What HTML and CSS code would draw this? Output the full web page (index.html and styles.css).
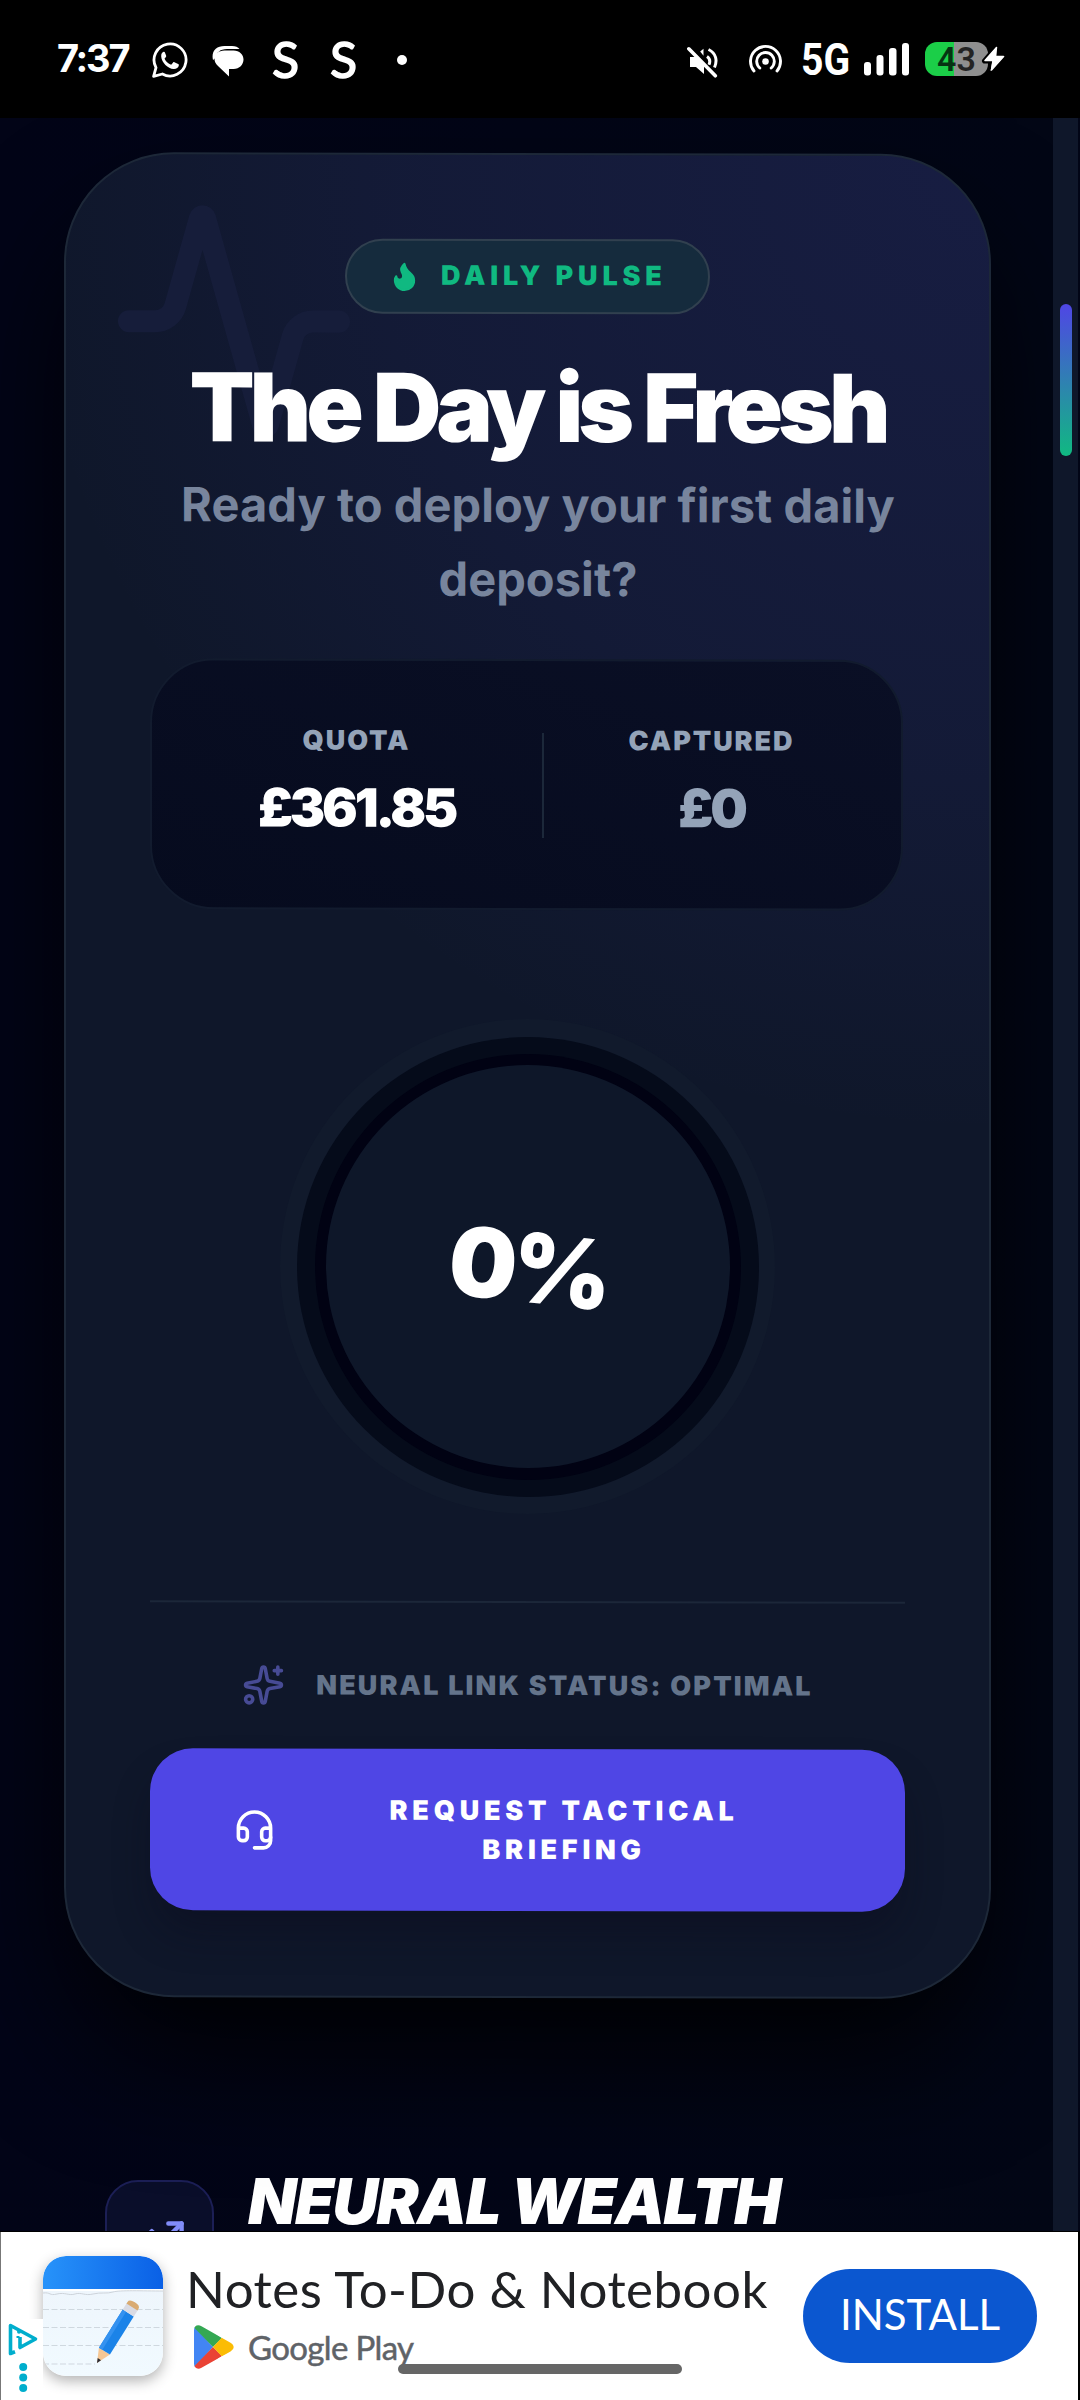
FILE: index.html
```html
<!DOCTYPE html>
<html lang="en">
<head>
<meta charset="utf-8">
<title>Daily Pulse</title>
<link rel="stylesheet" href="styles.css">
</head>
<body>
<header class="status">
  <div class="status-left">
    <span class="clock">7:37</span>
    <svg class="ico-wa" viewBox="0 0 36 36" fill="none"><path d="M1.6 34.4 4 25.6A16 16 0 1 1 10.4 32Z" stroke="#fff" stroke-width="2.8" stroke-linejoin="round"/><path d="M11.6 9.8c-.9.3-2.7 1.7-2.4 4.600C9.600 20.600 16 26.500 21.500 27c2.800.2 4.900-1.400 5.300-3.600.2-.8 0-1-.7-1.400l-3.700-1.800c-.6-.2-.9-.1-1.300.4l-1.400 1.700c-.4.4-.7.4-1.200.2-2.500-1-4.700-3.200-5.800-5.400-.2-.5-.1-.7.300-1.100.9-1 1.500-1.700 1.100-2.600l-1.300-3.100c-.3-.6-.6-.7-1.200-.5Z" fill="#fff"/></svg>
    <svg class="ico-msg" viewBox="0 0 32 32"><path d="M12.500 1h7.500c3.500 0 6 1.200 7.500 3H15C8 4 4.500 7.500 4 12.500L1 15C-1 6.500 4 1 12.500 1Z" fill="#fff"/><path d="M12.500 5.500h9C27.500 5.500 31.500 9.500 31.500 14.500S27.500 24 21.500 24H17v7.500L6 21C3.500 18.500 2.500 16.500 2.500 14 2.500 9 6.500 5.500 12.500 5.500Z" fill="#fff"/></svg>
    <span class="app-s">S</span>
    <span class="app-s app-s-last">S</span>
    <i class="more-dot"></i>
  </div>
  <div class="status-right">
    <svg class="ico-mute" viewBox="0 0 31 32" fill="none" stroke="#fff"><path d="M3 11h5.500l8.500 8.500V28l-8-7H3Z" fill="#fff" stroke="none"/><path d="m13.200 5.500 3.300-2.700v7Z" fill="#fff" stroke="none"/><path d="M20 10.500c3 2 3.300 5 2 8.200M21.500 3.500c7.800 3.800 9 11.200 6 18" stroke-width="3"/><path d="m1.800 2.800 26.500 27" stroke-width="3.600" stroke-linecap="round"/></svg>
    <svg class="ico-hot" viewBox="0 0 33 32" fill="none" stroke="#fff" stroke-width="2.900" stroke-linecap="round"><circle cx="16.500" cy="18.500" r="3.300" fill="#fff" stroke="none"/><path d="M10.800 25a8.800 8.800 0 1 1 11.400 0"/><path d="M5 28a15 15 0 1 1 23 0"/></svg>
    <span class="net"><span class="net-text">5G</span></span>
    <svg class="ico-bars" viewBox="0 0 45 34" fill="#fff"><rect y="20" width="7" height="13.500" rx="3"/><rect x="12.500" y="13" width="7" height="20.500" rx="3"/><rect x="25" y="6" width="7.500" height="27.500" rx="3"/><rect x="38" y="1" width="7" height="32.500" rx="3"/></svg>
    <div class="battery">
      <span class="battery-num">43</span>
      <svg class="bolt" viewBox="0 0 26 30"><path d="M15.500 3 3.500 17h8L9.500 27 23.500 12h-8.200Z" fill="#fff" stroke="#000" stroke-width="5" paint-order="stroke" stroke-linejoin="round"/><path d="M15.500 3.500 4 16.500h8L10.500 26 22.500 12.500h-8.200Z" fill="#fff" stroke="#fff" stroke-width="1.500" stroke-linejoin="round"/></svg>
    </div>
  </div>
</header>

<div class="viewport">
  <main class="page">
    <article class="card">
      <svg class="pulse-mark" viewBox="0 0 24 24" fill="none" stroke="currentColor" stroke-width="2.100" stroke-linecap="round" stroke-linejoin="round"><path d="M22 12h-2.480a2 2 0 0 0-1.930 1.460l-2.350 8.360a.25.25 0 0 1-.48 0L9.240 2.180a.25.25 0 0 0-.48 0l-2.350 8.360A2 2 0 0 1 4.490 12H2"/></svg>
      <div class="pill">
        <svg class="flame" viewBox="0 0 24 24" fill="currentColor"><path d="M8.500 14.500A2.500 2.500 0 0 0 11 12c0-1.380-.5-2-1-3-1.072-2.143-.224-4.054 2-6 .5 2.500 2 4.900 4 6.500 2 1.600 3 3.500 3 5.500a7 7 0 1 1-14 0c0-1.153.433-2.294 1-3a2.500 2.500 0 0 0 2.500 2.500z" stroke="currentColor" stroke-linejoin="round"/></svg>
        <span class="pill-text">DAILY PULSE</span>
      </div>
      <h1 class="title">The Day is Fresh</h1>
      <p class="lead">Ready to deploy your first daily<br>deposit?</p>
      <section class="stats">
        <div class="stat"><span class="stat-label">QUOTA</span><span class="stat-value">£361.85</span></div>
        <i class="stat-rule"></i>
        <div class="stat stat-muted"><span class="stat-label">CAPTURED</span><span class="stat-value">£0</span></div>
      </section>
      <div class="ring"><div class="ring-track"><div class="ring-groove"><div class="ring-core"><span class="percent">0%</span></div></div></div></div>
      <footer class="foot">
        <div class="link-status">
          <svg class="ico-43" viewBox="0 0 24 24" fill="none" stroke="currentColor" stroke-width="2" stroke-linecap="round" stroke-linejoin="round"><path d="M11.017 2.814a1 1 0 0 1 1.966 0l1.051 5.558a2 2 0 0 0 1.594 1.594l5.558 1.051a1 1 0 0 1 0 1.966l-5.558 1.051a2 2 0 0 0-1.594 1.594l-1.051 5.558a1 1 0 0 1-1.966 0l-1.051-5.558a2 2 0 0 0-1.594-1.594l-5.558-1.051a1 1 0 0 1 0-1.966l5.558-1.051a2 2 0 0 0 1.594-1.594z"/><path d="M20 2v4M22 4h-4"/><circle cx="4" cy="20" r="2"/></svg>
          <span>NEURAL LINK STATUS: OPTIMAL</span>
        </div>
        <button class="cta">
          <svg class="ico-43" viewBox="0 0 24 24" fill="none" stroke="currentColor" stroke-width="2" stroke-linecap="round" stroke-linejoin="round"><path d="M3 11h3a2 2 0 0 1 2 2v3a2 2 0 0 1-2 2H5a2 2 0 0 1-2-2v-5Zm0 0a9 9 0 1 1 18 0m0 0v5a2 2 0 0 1-2 2h-1a2 2 0 0 1-2-2v-3a2 2 0 0 1 2-2h3Z"/><path d="M21 16v2a4 4 0 0 1-4 4h-5"/></svg>
          <span class="cta-text">REQUEST TACTICAL<br>BRIEFING</span>
        </button>
      </footer>
    </article>
    <section class="wealth">
      <div class="wealth-icon"><svg viewBox="0 0 24 24" fill="none" stroke="currentColor" stroke-width="2" stroke-linecap="round" stroke-linejoin="round"><path d="M22 7 13.500 15.500 8.500 10.500 2 17"/><path d="M16 7h6v6"/></svg></div>
      <h2 class="wealth-title">NEURAL WEALTH</h2>
    </section>
  </main>
  <aside class="scrollbar"><i class="thumb"></i></aside>
</div>

<section class="ad">
  <svg class="ad-icon" viewBox="0 0 120 120">
    <defs>
      <clipPath id="tile"><rect width="120" height="120" rx="23"/></clipPath>
      <linearGradient id="blue"><stop stop-color="#2793fa"/><stop offset="1" stop-color="#0a60e6"/></linearGradient>
      <linearGradient id="paper" x2="0" y2="1"><stop stop-color="#edf4fb"/><stop offset="1" stop-color="#f1faff"/></linearGradient>
    </defs>
    <g clip-path="url(#tile)">
      <rect width="120" height="120" fill="url(#paper)"/>
      <rect width="120" height="33" fill="url(#blue)"/>
      <path d="M0 34h120" stroke="#fff" stroke-width="2"/>
      <path d="M0 37c8-1 6 3 14 1s12 2 18 0 10 2 18 0 14 0 20-2 30-1 50-1" fill="none" stroke="#cdd3da" stroke-width="1"/>
      <path d="M0 53.500h120M0 71.500h120M0 89.500h120M0 108h52" stroke="#cfd8df" stroke-width="1.200" stroke-dasharray="6 2.500"/>
      <g transform="translate(54 107) rotate(32)">
        <path d="M-6.500-14h13L0 0Z" fill="#f5c795"/><path d="M-2-4.500h4L0 0Z" fill="#2c2c34"/>
        <path d="M-6.500-59h13v45h-13Z" fill="#1b83e8"/><path d="M-6.500-59h4v45h-4Z" fill="#3492f0"/>
        <path d="M-6.500-67h13v8h-13Z" fill="#d9dbe4"/><path d="M-6.500-68q0-3.500 6.500-3.500T6.500-68v2h-13Z" fill="#d9ab72"/>
      </g>
    </g>
  </svg>
  <div class="ad-copy">
    <div class="ad-title">Notes To-Do &amp; Notebook</div>
    <div class="ad-store">
      <svg class="play" viewBox="0 0 41 44"><defs><clipPath id="playshape"><path d="M1 5.500C1 1 4.500-1 8.500 1.300L37.500 17.800c4.200 2.400 4.200 6.200 0 8.600L8.500 42.800C4.500 45 1 43 1 38.500Z"/></clipPath></defs><g clip-path="url(#playshape)"><path d="M0 0v44L20 22Z" fill="#4285f4"/><path d="M0-1h9l20 14-9 9L1 2.500Z" fill="#34a853"/><path d="M0 45h9l20-14-9-9L1 41.500Z" fill="#ea4335"/><path d="m20 22 9-9.500L41 18v8l-12 5.500Z" fill="#fbbc04"/></g></svg>
      <span>Google Play</span>
    </div>
  </div>
  <button class="install">INSTALL</button>
  <div class="ad-choices">
    <svg viewBox="0 0 43 81" fill="none"><path d="M15 32.800 10.500 34.500V6.500L35.500 20 20 28.500V18" stroke="#00aecd" stroke-width="3.600" stroke-linejoin="round"/><circle cx="19" cy="12.800" r="2" fill="#00aecd"/><path d="M16.500 18h3" stroke="#00aecd" stroke-width="2"/><circle cx="23.200" cy="48" r="4" fill="#00aecd"/><circle cx="23.200" cy="58.500" r="4" fill="#00aecd"/><circle cx="23.200" cy="69" r="4" fill="#00aecd"/></svg>
  </div>
  <i class="home-handle"></i>
</section>
</body>
</html>
```
FILE: styles.css
```css
* { box-sizing: border-box; margin: 0; }
body {
  width: 1080px; height: 2400px; overflow: hidden;
  display: flex; flex-direction: column;
  background: #000; color: #fff; font-family: Inter, sans-serif;
}
svg { display: block; flex: none; }
i { display: block; }

/* status bar */
.status { height: 118px; flex: none; display: flex; justify-content: space-between; padding: 0 72px 0 57px; }
.status-left, .status-right { display: flex; align-items: center; }
.clock { width: 95px; font-size: 38px; font-weight: 700; letter-spacing: -2.2px; line-height: 40px; padding-bottom: 2px; }
.ico-wa { width: 36px; height: 36px; margin: 2px 24px 0 0; }
.ico-msg { width: 32px; height: 32px; margin: 4px 28px 0 0; }
.app-s { width: 58px; font: 400 50px/60px Lato, sans-serif; padding-bottom: 1px; -webkit-text-stroke: 1.5px #fff; }
.app-s-last { width: 67px; }
.more-dot { width: 10px; height: 10px; border-radius: 50%; background: #fff; margin-top: 2px; }
.ico-mute { width: 31px; height: 32px; margin: 5px 31px 0 0; }
.ico-hot { width: 33px; height: 32px; margin: 0 21px 0 0; }
.net { width: 61px; margin-top: 1px; }
.net-text { display: block; width: 56px; margin-left: -2px; font: 700 45px/50px Roboto, sans-serif; transform: scaleX(.87); transform-origin: 0 50%; }
.ico-bars { width: 45px; height: 34px; margin: 0 16px 0 0; }
.battery {
  position: relative; width: 63px; height: 34px; margin-right: 20px; border-radius: 12px;
  background: linear-gradient(90deg, #1bce48 29px, #8f8f8f 29px);
  display: flex; align-items: center; justify-content: center;
}
.battery-num { font: 600 34px/34px Roboto, sans-serif; color: rgba(0, 0, 0, .75); }
.bolt { position: absolute; left: 56px; top: 2px; width: 26px; height: 30px; }

/* scrolled page */
.viewport { height: 2113px; flex: none; display: flex; overflow: hidden; background: #020516; }
.page { width: 1053px; padding: 35px 62px 0 64px; overflow: hidden; background: linear-gradient(90deg, #020417, #020615); }
.scrollbar { width: 25px; padding: 186px 6px 0 7px; background: #0f172a; }
.thumb { height: 152px; border-radius: 6px; background: linear-gradient(#4f46e5, #10b981); }

.card {
  position: relative; width: 927px; height: 1845px; padding: 84px; border: 2px solid #1d2838; border-radius: 110px;
  display: flex; flex-direction: column; align-items: center;
  background: radial-gradient(circle 980px at 100% 0, rgba(79, 70, 229, .13), rgba(79, 70, 229, .07) 60%, rgba(79, 70, 229, 0)), #0f172a;
  box-shadow: 0 66px 130px -20px #000;
  transform: skewY(.12deg);
}
.pulse-mark { position: absolute; left: 42px; top: 41px; width: 252px; height: 252px; color: #161d3a; }
.pill {
  position: relative; width: 365px; height: 75px; flex: none; padding-left: 41px;
  display: flex; align-items: center; gap: 20px; border: 2px solid #31404f; border-radius: 38px;
  background: #152b3d; color: #10b981; font-size: 27px; font-weight: 900; letter-spacing: 4.83px;
}
.pill-text { padding-bottom: 2px; }
.flame { width: 33px; height: 33px; stroke-width: 1.5; }
.title { position: relative; margin-top: 46px; padding-left: 20px; font-size: 95px; line-height: 96px; font-weight: 900; letter-spacing: -5.05px; white-space: nowrap; }
.lead { margin-top: 12px; padding-left: 21px; font-size: 47px; line-height: 74px; font-weight: 700; letter-spacing: .05px; text-align: center; color: #78859d; white-space: nowrap; }
.stats {
  width: 753px; height: 251px; flex: none; margin: 43px 3px 0 0; padding: 60px 0 0 20px;
  display: grid; grid-template-columns: 370px 2px 336px;
  border: 2px solid #121b2e; border-radius: 64px; background: linear-gradient(20deg, #060b1e, #0a0f25);
}
.stat { display: flex; flex-direction: column; align-items: center; }
.stat-label { font-size: 27px; line-height: 40px; font-weight: 900; letter-spacing: 1.9px; color: #94a3b8; }
.stat-value { margin-top: 17px; font-size: 53px; line-height: 60px; font-weight: 900; letter-spacing: -3.2px; }
.stat-muted .stat-value { color: #94a3b8; }
.stat-rule { height: 105px; margin-top: 12px; background: #1c283a; }

.ring, .ring-track, .ring-groove, .ring-core { display: grid; place-items: center; border-radius: 50%; }
.ring { width: 495px; height: 495px; flex: none; margin-top: 109px; background: #111a2c; }
.ring-track { width: 462px; height: 460px; background: #050b1a; }
.ring-groove { width: 426px; height: 426px; background: #010213; }
.ring-core { width: 404px; height: 403px; background: #0e1729; }
.percent { font-size: 96px; line-height: 96px; font-weight: 900; letter-spacing: -4.8px; padding-left: 2px; transform: rotate(6deg); }

.foot { width: 755px; margin-top: 87px; padding-top: 61px; border-top: 2px solid #1c2739; }
.link-status { display: flex; align-items: center; justify-content: center; gap: 31px; font-size: 27px; line-height: 40px; font-weight: 900; letter-spacing: 2.14px; color: #64748b; }
.ico-43 { width: 43px; height: 43px; }
.link-status .ico-43 { color: #474b95; }
.cta {
  width: 755px; height: 162px; margin-top: 42px; padding: 0 53px 0 83px; border: 0; border-radius: 43px;
  display: flex; align-items: center; background: #4f46e5; color: #fff;
  box-shadow: 0 26px 40px -6px rgba(10, 12, 28, .45);
}
.cta-text { flex: 1; text-align: center; font: 900 27px/39px Inter, sans-serif; letter-spacing: 4.78px; }

.wealth { display: flex; gap: 34px; padding: 171px 0 0 41px; }
.wealth-icon { width: 109px; height: 109px; margin-top: 11px; display: grid; place-items: center; border: 2px solid #1c1f56; border-radius: 33px; background: #0a0e2a; color: #818cf8; }
.wealth-icon svg { width: 53px; height: 53px; }
.wealth-title { margin-top: 1px; font-size: 63px; line-height: 60px; padding-top: 1px; font-weight: 900; font-style: italic; letter-spacing: -1.53px; white-space: nowrap; }

/* banner */
.ad { position: relative; width: 1078px; height: 168px; flex: none; margin-top: 1px; padding: 24px 41px 0 42px; display: flex; align-items: flex-start; background: #fff; border-left: 1px solid #777; }
.ad-icon { width: 120px; height: 120px; border-radius: 23px; box-shadow: 0 5px 14px rgba(0, 0, 0, .3); }
.ad-copy { margin: 3px 0 0 23px; font-family: Lato, sans-serif; }
.ad-title { font-size: 51px; line-height: 60px; letter-spacing: .5px; color: #202124; white-space: nowrap; }
.ad-store { display: flex; align-items: center; gap: 14px; margin: 6px 0 0 7px; font-size: 33px; line-height: 42px; letter-spacing: -.65px; color: #5f6368; -webkit-text-stroke: .5px #5f6368; }
.play { width: 41px; height: 44px; }
.install { width: 234px; height: 94px; margin: 13px 0 0 auto; padding: 0 0 4px; border: 0; border-radius: 47px; background: #0b57d0; color: #fff; font: 400 42px/50px Lato, sans-serif; }
.ad-choices { position: absolute; left: 0; top: 87px; width: 42px; height: 81px; background: #fff; }
.ad-choices svg { width: 43px; height: 81px; margin-left: -1px; }
.home-handle { position: absolute; left: 397px; top: 132px; width: 284px; height: 10px; border-radius: 5px; background: #666; }
```
